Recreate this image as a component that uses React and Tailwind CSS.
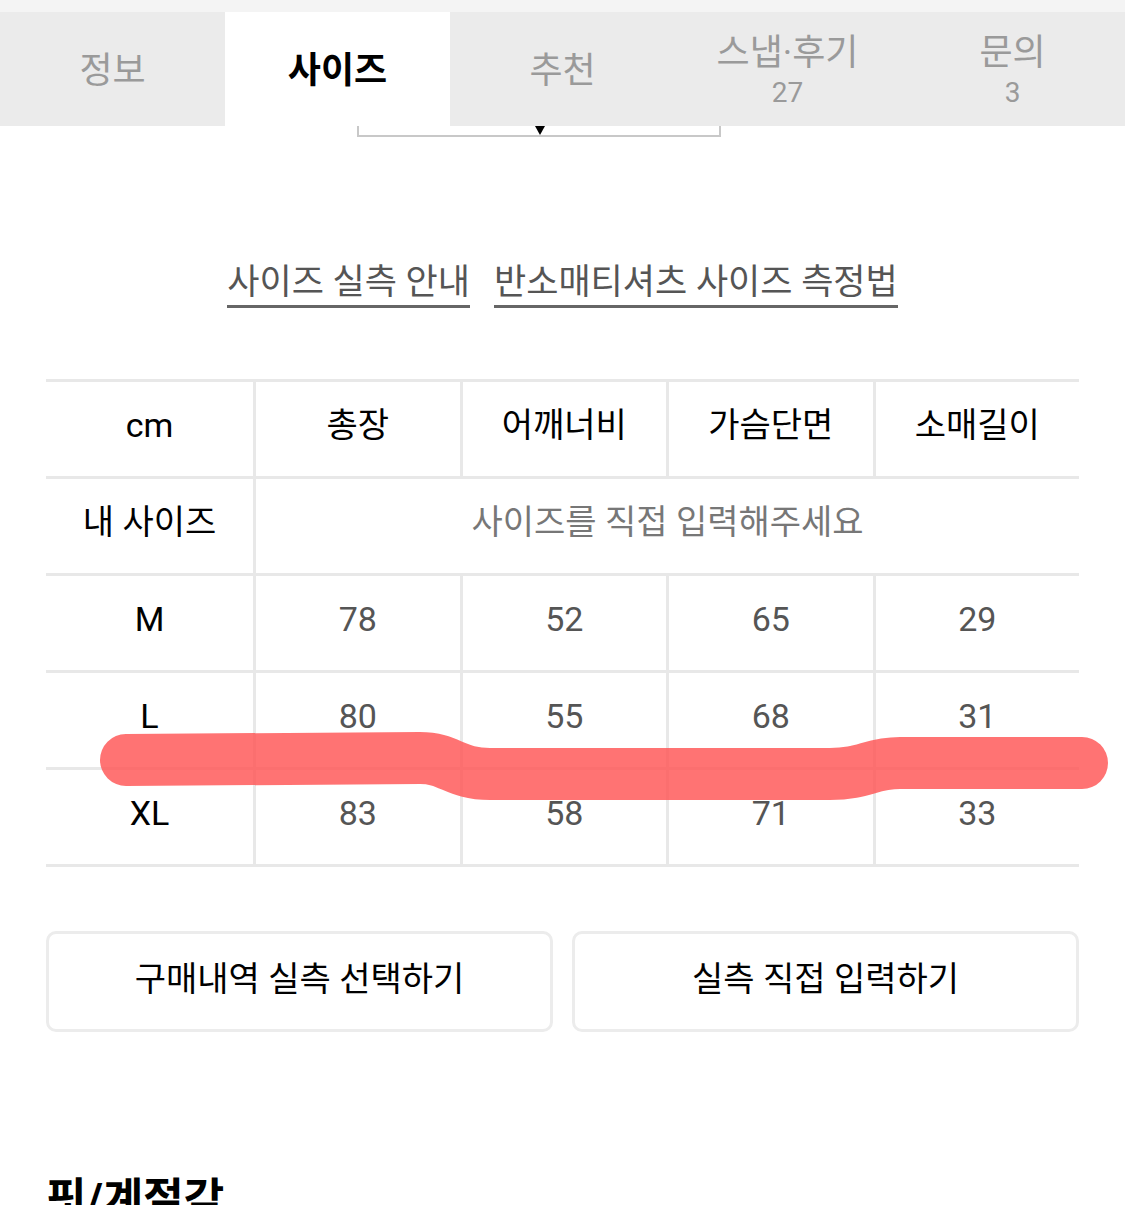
const font = { fontFamily: 'Roboto, "Noto Sans CJK KR", "Noto Sans", sans-serif' };

const tabs = [
  { label: "정보" },
  { label: "사이즈", active: true },
  { label: "추천" },
  { label: "스냅·후기", count: "27" },
  { label: "문의", count: "3" },
];

const cols = ["총장", "어깨너비", "가슴단면", "소매길이"];
const rows = [
  { size: "M", vals: ["78", "52", "65", "29"] },
  { size: "L", vals: ["80", "55", "68", "31"] },
  { size: "XL", vals: ["83", "58", "71", "33"] },
];

function Cell({ children, first, className = "" }) {
  return (
    <div
      className={`flex h-[97px] items-center justify-center pb-2 border-b-[3px] border-[#e8e8e8] ${first ? "" : "border-l-[3px]"} ${className}`}
    >
      {children}
    </div>
  );
}

export default function App() {
  return (
    <div className="relative w-[1125px] h-[1205px] overflow-hidden bg-white" style={font}>
      <div className="h-3 bg-[#f4f4f4]" />
      <div className="grid grid-cols-5 h-[114px] bg-[#ebebeb]">
        {tabs.map((t) => (
          <div
            key={t.label}
            className={`flex flex-col items-center justify-center pt-1 ${t.active ? "bg-white text-black font-bold" : "text-[#9a9a9a]"}`}
          >
            <span className="text-[36px] leading-[38px]">{t.label}</span>
            {t.count && <span className="text-[28px] leading-[30px] mt-[6px]">{t.count}</span>}
          </div>
        ))}
      </div>

      <div className="relative ml-[357px] w-[364px] h-[11px] border-x-2 border-b-2 border-[#c8c8c8]">
        <div className="absolute left-[176px] top-0 w-0 h-0 border-x-[5px] border-x-transparent border-t-[9px] border-t-black" />
      </div>

      <div className="mt-[124px] flex justify-center gap-6 text-[35px] text-[#555]">
        <span className="border-b-[3px] border-[#666] leading-[44px]">사이즈 실측 안내</span>
        <span className="border-b-[3px] border-[#666] leading-[44px]">반소매티셔츠 사이즈 측정법</span>
      </div>

      <div className="mx-[46px] mt-[71px] border-t-[3px] border-[#e8e8e8] grid grid-cols-[207px_repeat(4,1fr)] text-[34px]">
        <Cell first className="text-black">cm</Cell>
        {cols.map((c) => (
          <Cell key={c} className="text-black">{c}</Cell>
        ))}
        <Cell first className="text-black">내 사이즈</Cell>
        <Cell className="col-span-4 text-[#777]">사이즈를 직접 입력해주세요</Cell>
        {rows.map((r) => (
          <div key={r.size} className="contents">
            <Cell first className="text-black">{r.size}</Cell>
            {r.vals.map((v, i) => (
              <Cell key={i} className="text-[#555]">{v}</Cell>
            ))}
          </div>
        ))}
      </div>

      <div className="mx-[46px] mt-[64px] grid grid-cols-2 gap-[19px]">
        <button className="h-[101px] rounded-[10px] border-[3px] border-[#ececec] text-[34px] text-black pb-1">
          구매내역 실측 선택하기
        </button>
        <button className="h-[101px] rounded-[10px] border-[3px] border-[#ececec] text-[34px] text-black pb-1">
          실측 직접 입력하기
        </button>
      </div>

      <h2 className="mx-[46px] mt-[142px] text-[44px] font-bold text-black leading-[52px]">핏/계절감</h2>

      <svg className="absolute left-0 top-0 pointer-events-none" width="1125" height="1205">
        <path
          d="M126 760 L420 758 C450 758 455 774 490 774 L830 774 C865 774 870 763 900 763 L1082 763"
          fill="none"
          stroke="#ff5050"
          strokeOpacity="0.8"
          strokeWidth="52"
          strokeLinecap="round"
          strokeLinejoin="round"
        />
      </svg>
    </div>
  );
}
